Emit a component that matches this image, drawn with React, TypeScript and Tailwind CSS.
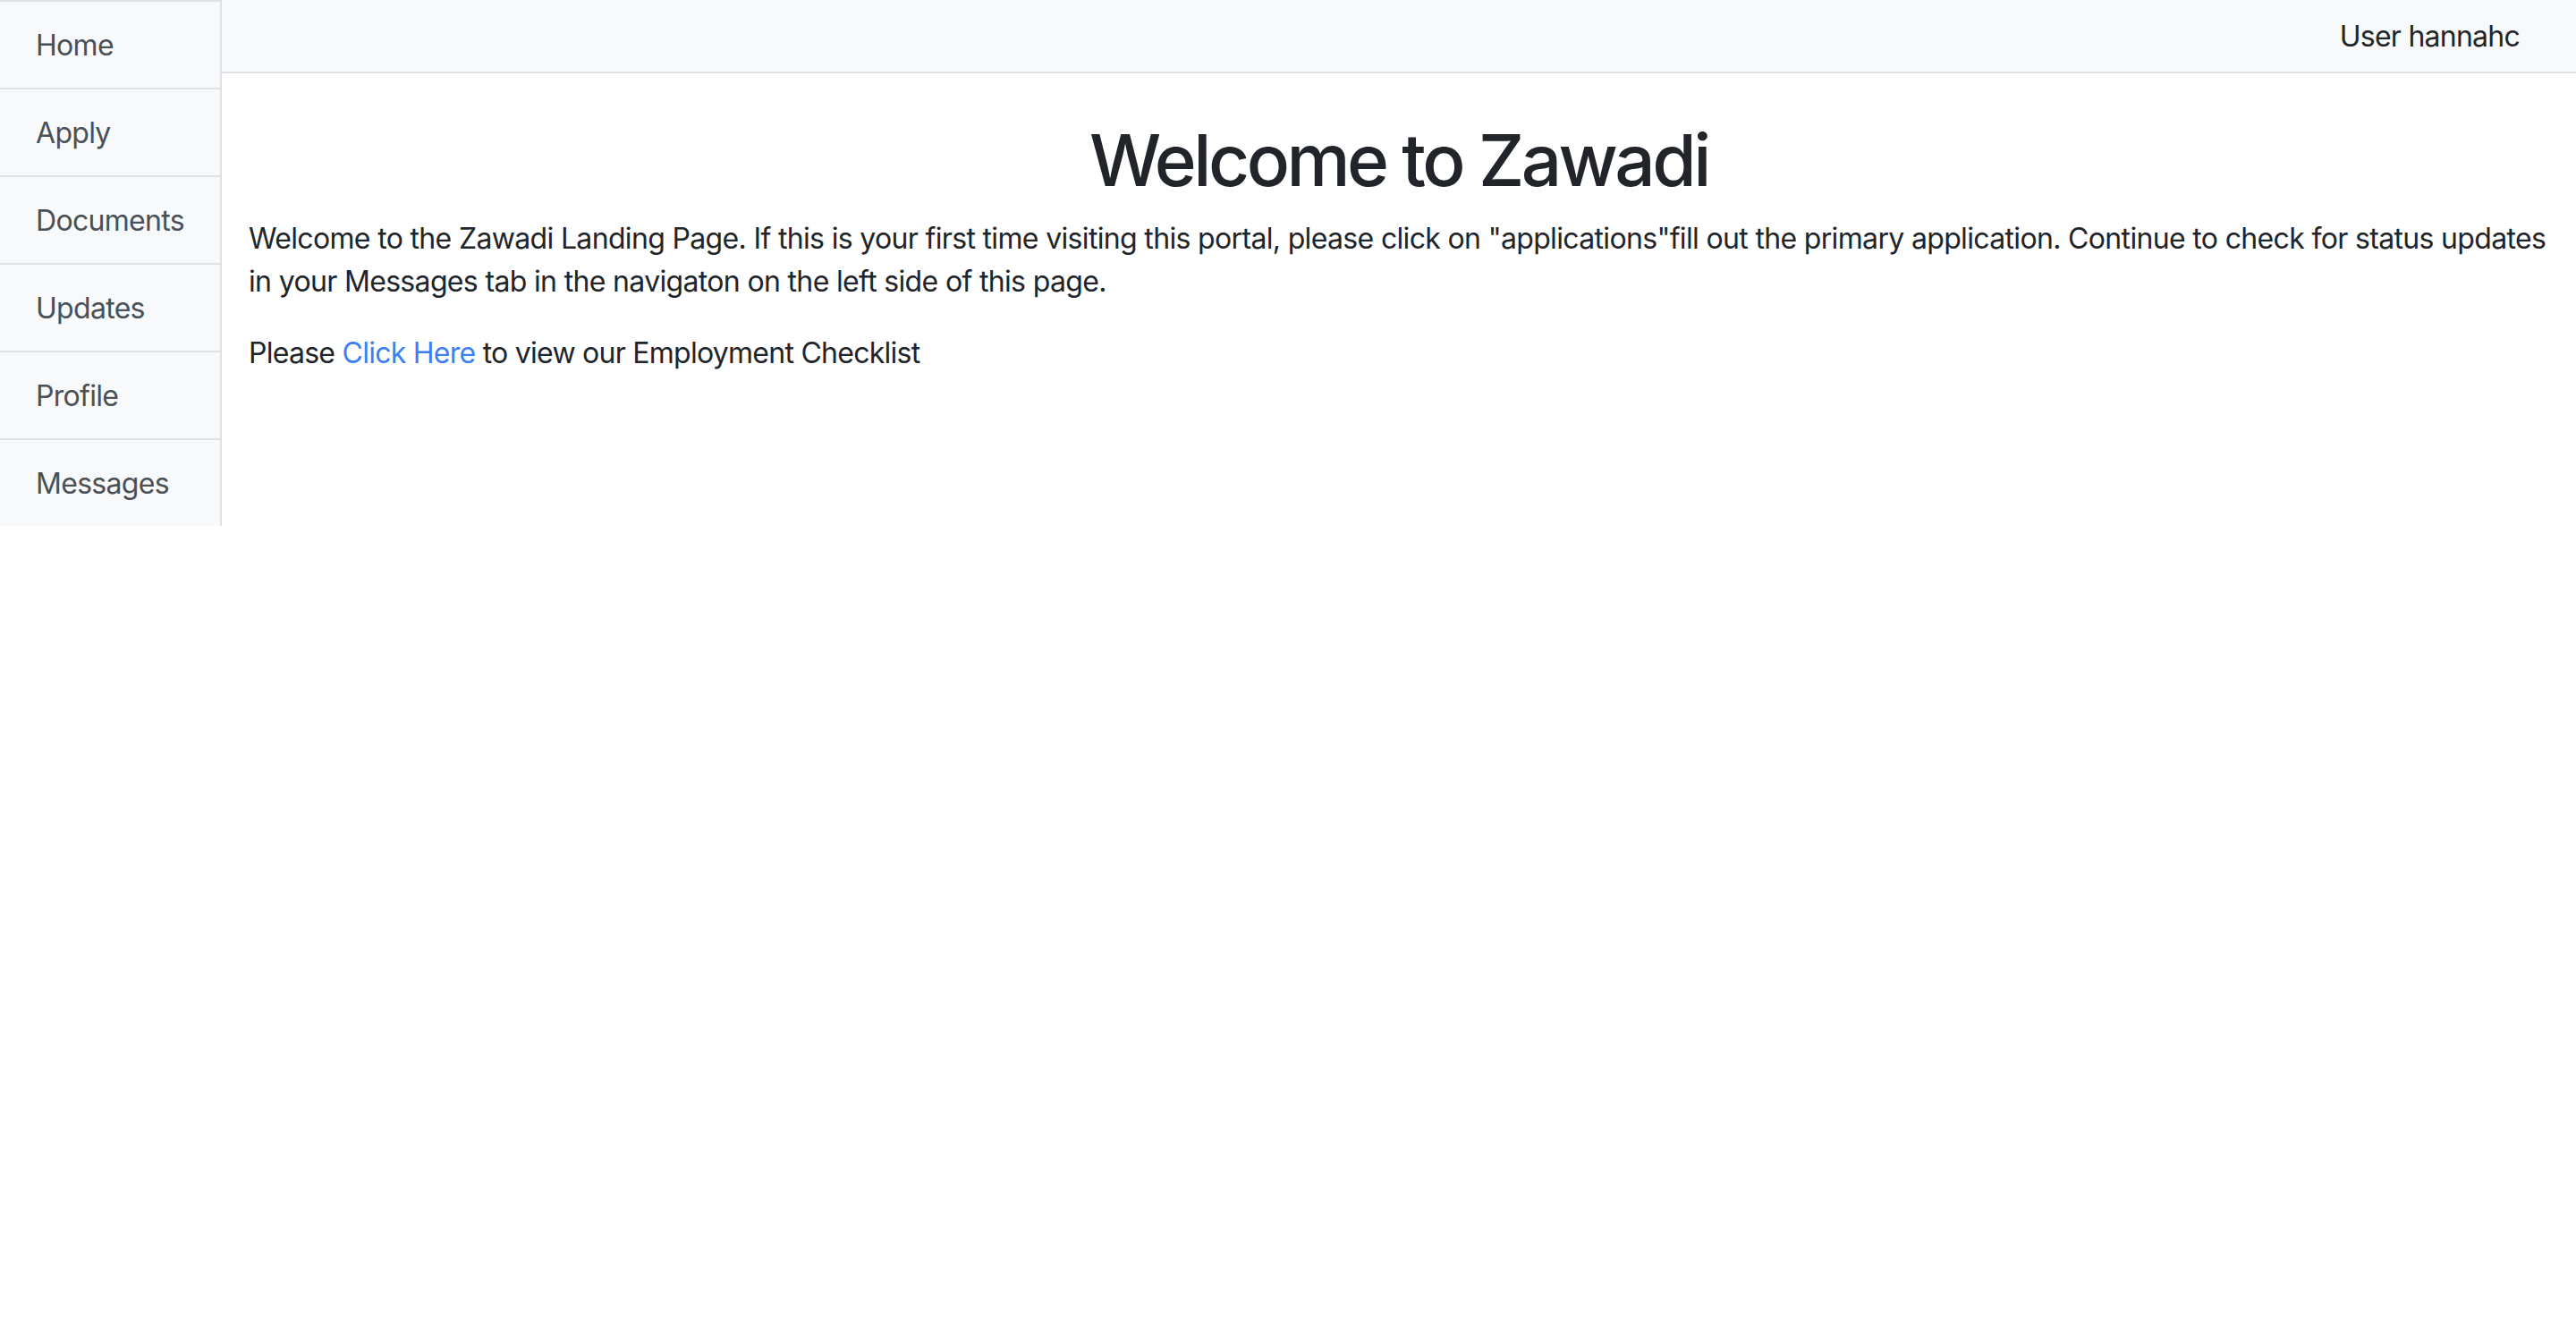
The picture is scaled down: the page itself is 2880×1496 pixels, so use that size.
import React from "react";

const navItems = ["Home", "Apply", "Documents", "Updates", "Profile", "Messages"];

export default function App() {
  return (
    <div
      className="flex min-h-screen bg-white text-[#212529]"
      style={{ fontFamily: "Inter, 'Noto Sans', 'Liberation Sans', sans-serif" }}
    >
      <nav className="w-[248px] shrink-0 self-start border-r-2 border-[#dee2e6] bg-[#f8f9fa]">
        {navItems.map((item) => (
          <div
            key={item}
            className="h-[98px] border-t-2 border-[#dee2e6] px-[40px] pt-[25px] text-[32px] leading-[48px] tracking-[-0.7px] text-[#495057]"
          >
            {item}
          </div>
        ))}
      </nav>
      <div className="flex min-w-0 flex-1 flex-col">
        <header className="flex h-[82px] items-start justify-end border-b-2 border-[#dee2e6] bg-[#f8f9fa] pr-[63px] pt-[17px]">
          <span className="text-[32px] leading-[48px] tracking-[-0.75px] text-[#212529]">User hannahc</span>
        </header>
        <main className="px-[30px] pt-[49px]">
          <h1 className="mb-[16px] text-center text-[80px] font-medium leading-[96px] tracking-[-3.5px]">
            Welcome to Zawadi
          </h1>
          <p className="mb-[32px] text-[32px] leading-[48px] tracking-[-0.66px]">
            Welcome to the Zawadi Landing Page. If this is your first time visiting this portal, please click on
            "applications"fill out the primary application. Continue to check for status updates in your Messages tab
            in the navigaton on the left side of this page.
          </p>
          <p className="text-[32px] leading-[48px] tracking-[-0.74px]">
            Please <a href="#" className="text-[#3b7ff5]">Click Here</a> to view our Employment Checklist
          </p>
        </main>
      </div>
    </div>
  );
}
